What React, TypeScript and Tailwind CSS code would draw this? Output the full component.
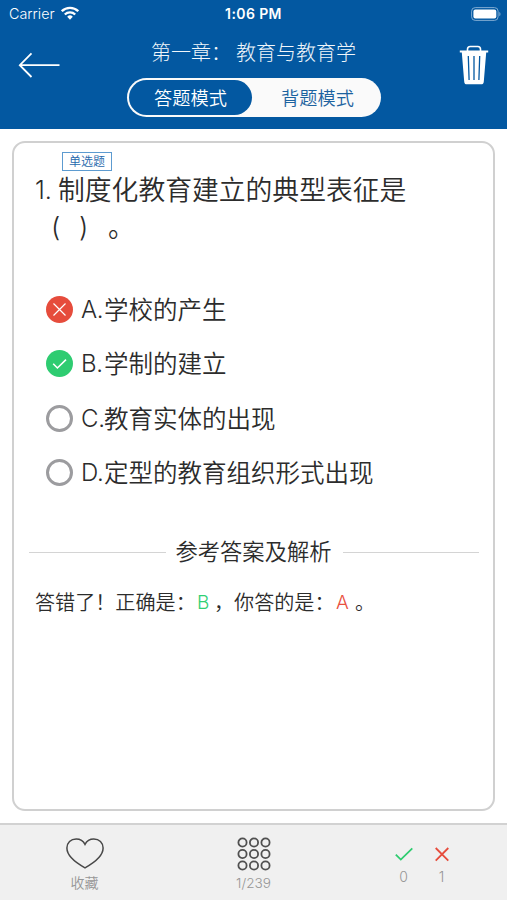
// Quiz question screen

import React from "react";

type OptionState = "wrong" | "right" | "idle";

const options: { label: string; text: string; state: OptionState }[] = [
  { label: "A.", text: "学校的产生", state: "wrong" },
  { label: "B.", text: "学制的建立", state: "right" },
  { label: "C.", text: "教育实体的出现", state: "idle" },
  { label: "D.", text: "定型的教育组织形式出现", state: "idle" },
];

const OptionMark: React.FC<{ state: OptionState }> = ({ state }) => {
  if (state === "idle") {
    return <span className="mb-[2px] size-[27px] rounded-full border-3 border-[#9c9c9f]" />;
  }
  return (
    <svg viewBox="0 0 27 27" className="mb-[2px] size-[27px]" fill="none" stroke="#fff" strokeWidth="1.2">
      <circle
        cx="13.5"
        cy="13.5"
        r="13.5"
        stroke="none"
        className={state === "wrong" ? "fill-[#e64c3c]" : "fill-[#2ecc71]"}
      />
      {state === "wrong" ? (
        <path d="M7.5 7.5l12 12M19.5 7.5l-12 12" />
      ) : (
        <path d="M7.2 13.8l4.2 4.2 8.6-8.4" strokeWidth="1.6" />
      )}
    </svg>
  );
};

const StatusBar: React.FC = () => (
  <div className="flex h-7 items-center justify-between pr-[6px] pl-[9px] text-white">
    <div className="flex w-[90px] items-center gap-[6px]">
      <span className="text-[14.3px]">Carrier</span>
      <svg viewBox="0 0 18 14" className="-mt-[2px] h-[14px] w-[18px]" fill="none" stroke="#fff" strokeWidth="2.3">
        <path d="M.8 5.2a11.7 11.7 0 0 1 16.4 0M3.8 8.5a7.4 7.4 0 0 1 10.4 0" />
        <path d="M9 13.7l-2.8-3a4 4 0 0 1 5.6 0z" fill="#fff" stroke="none" />
      </svg>
    </div>
    <span className="-ml-[3px] -mt-px text-[14px] font-semibold tracking-[0.4px]">1:06 PM</span>
    <div className="flex w-[90px] justify-end">
      <svg viewBox="0 0 30 14" className="-mt-px h-[14px] w-[30px]" fill="none">
        <rect x=".6" y=".6" width="26.5" height="12.8" rx="3.6" stroke="#7fabd2" strokeWidth="1" />
        <rect x="2.4" y="2.4" width="22.9" height="9.2" rx="2" fill="#fff" />
        <path d="M28.3 4.7v4.6c1.6-.8 1.6-3.8 0-4.6z" fill="#7fabd2" />
      </svg>
    </div>
  </div>
);

const Header: React.FC = () => (
  <header className="h-[129px] bg-[#0358a1]">
    <StatusBar />
    <div className="flex justify-between px-[18px] text-white">
      <svg viewBox="0 0 42 26" className="mt-6 h-[26px] w-[42px]" fill="none" stroke="#fff" strokeWidth="1.8">
        <path d="M13.5 1.3L1.8 13.2 13.5 25M1.8 13.2H41.5" />
      </svg>
      <div className="flex flex-col items-center">
        <h1 className="flex h-[50px] items-center gap-[5px] text-[20px] font-light text-[#f0f6fb]">
          <span>第一章：</span>
          <span>教育与教育学</span>
        </h1>
        <div className="flex h-[39px] w-[254px] rounded-full bg-[#fafafa] p-[2px] text-[18.2px] leading-[37px]">
          <span className="w-[123px] rounded-full bg-[#0358a1] pl-px text-center">答题模式</span>
          <span className="flex-1 pl-[5px] text-center text-[#1c629f]">背题模式</span>
        </div>
      </div>
      <div className="flex w-[42px] justify-end">
        <svg viewBox="0 0 30 40" className="mt-[17px] h-10 w-[30px]">
          <path d="M8.500 6.500V4.200q0-2.700 2.700-2.700h7.600q2.700 0 2.700 2.700v2.300" fill="none" stroke="#fff" strokeWidth="1.600" />
          <path d="M.8 5.600h28.400v1.900H.8zM2.800 7.500h24.400l-2.400 29c-.1 2-1 2.800-2.800 2.800H8c-1.800 0-2.700-.8-2.800-2.800z" fill="#fff" />
          <path d="M9.300 11l.8 24M15 11v24M20.700 11l-.8 24" stroke="#0358a1" strokeWidth="1.300" />
        </svg>
      </div>
    </div>
  </header>
);

const Answer: React.FC = () => (
  <section>
    <div className="flex items-center px-[14px]">
      <hr className="w-[137px] border-[#d4d4d4]" />
      <h2 className="w-[178px] pr-[2px] text-center text-[22.3px] leading-8">参考答案及解析</h2>
      <hr className="w-[136px] border-[#d4d4d4]" />
    </div>
    <p className="mt-[19px] flex pl-[20px] text-[20.1px] leading-8">
      <span className="w-[162px]">答错了！正确是：</span>
      <span className="w-[17px] text-[19px] text-[#2fd074]">B</span>
      <span className="w-[122px]">，你答的是：</span>
      <span className="w-[19px] text-[19px] text-[#e9503f]">A</span>
      <span>。</span>
    </p>
  </section>
);

const Footer: React.FC = () => (
  <footer className="grid h-[77px] grid-cols-3 border-t-2 border-[#d2d2d2] bg-[#f0f0f0] text-[14px] text-[#969696]">
    <div className="flex flex-col items-center pt-[13px]">
      <svg viewBox="0 0 38 31" className="h-[31px] w-[38px]" fill="none" stroke="#484848" strokeWidth="1.5">
        <path d="M19 6.3C17.2 2.6 13.8.9 10.2.9 4.8.9.9 4.6.9 10c0 8 8.5 14.5 18.1 19.8C28.6 24.500 37.100 18 37.100 10c0-5.400-3.900-9.100-9.300-9.100-3.600 0-7 1.700-8.800 5.400z" />
      </svg>
      <span className="leading-[28px]">收藏</span>
    </div>
    <div className="flex flex-col items-center pt-[12px]">
      <svg viewBox="0 0 34 34" className="size-[34px]" fill="none" stroke="#505050" strokeWidth="1.8">
        {[5.5, 17, 28.5].map((cy) =>
          [5.5, 17, 28.5].map((cx) => <circle key={`${cx}-${cy}`} cx={cx} cy={cy} r="4.1" />)
        )}
      </svg>
      <span className="text-[13.6px] leading-[24px]">1/239</span>
    </div>
    <div className="flex justify-center gap-5 pt-5">
      <div className="flex w-[18px] flex-col items-center">
        <svg viewBox="0 0 18 18" className="size-[18px]" fill="none" stroke="#2fcc70" strokeWidth="1.8">
          <path d="M.8 9.6l5 5L17.3 3.3" />
        </svg>
        <span className="leading-[28px]">0</span>
      </div>
      <div className="flex w-[18px] flex-col items-center">
        <svg viewBox="0 0 18 18" className="size-[18px]" fill="none" stroke="#e64c3c" strokeWidth="1.8">
          <path d="M2.7 3l12.6 12.6M15.3 3L2.7 15.6" />
        </svg>
        <span className="leading-[28px]">1</span>
      </div>
    </div>
  </footer>
);

const App: React.FC = () => {
  return (
    <div
      lang="zh-CN"
      className="flex h-[900px] w-[507px] flex-col overflow-hidden bg-white font-['Inter','Noto_Sans_CJK_SC',sans-serif] font-[350] whitespace-nowrap text-[#2c2c2c]"
    >
      <Header />

      {/* Question card */}
      <main className="mx-3 mt-3 mb-3 flex-1 rounded-[13px] border-2 border-[#d0d0d0] pl-px">
        <div className="ml-[47px] mt-[9px] flex h-[19px] w-[50px] items-center justify-center border border-[#5d9bd0] text-[12px] text-[#1f68ac]">
          单选题
        </div>
        <h2 className="flex pl-[20px] text-[26.8px] leading-[38px]">
          <span className="w-[23px] text-[25px]">1.</span>
          <span>制度化教育建立的典型表征是</span>
        </h2>
        <p className="flex pl-[36px] text-[26.8px] leading-[36px]">
          <span className="w-[28px] font-light">(</span>
          <span className="w-[29px] font-light">)</span>
          <span>。</span>
        </p>

        <ul className="mt-[38px] pl-[31px] text-[24.5px]">
          {options.map((option) => (
            <li key={option.label} className="flex h-[54.5px] items-center">
              <OptionMark state={option.state} />
              <span className="ml-[8px] flex">
                <span className="w-[23px] text-[24px] tracking-[-0.3px]">{option.label}</span>
                <span>{option.text}</span>
              </span>
            </li>
          ))}
        </ul>

        <div className="mt-[35px]">
          <Answer />
        </div>
      </main>

      <Footer />
    </div>
  );
};

export default App;
